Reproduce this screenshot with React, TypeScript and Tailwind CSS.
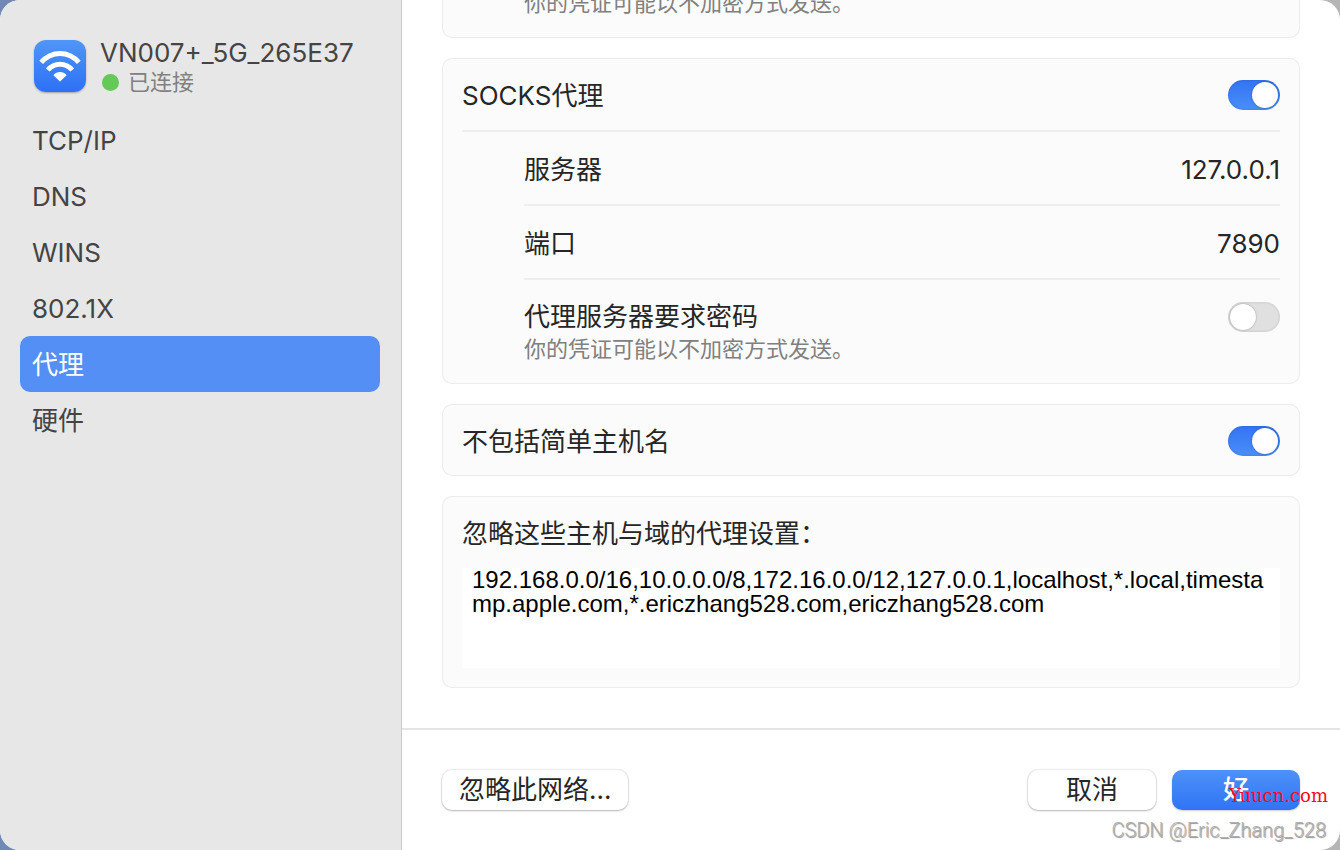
import React, { useId, useState } from "react";

function WifiIcon() {
  return (
    <svg viewBox="0 0 52 52" className="size-[52px]" aria-hidden="true">
      <path
        d="M7.2 22.4C17.6 10.5 34.4 10.5 44.8 22.4M13.8 30C20.4 22.2 31.6 22.2 38.2 30"
        fill="none"
        stroke="#fff"
        strokeWidth="5"
      />
      <path d="M19.3 35.2C22.8 31 29.2 31 32.7 35.2L26 41.4Z" fill="#fff" />
    </svg>
  );
}

function Toggle({ id, initial }: { id: string; initial: boolean }) {
  const [on, setOn] = useState(initial);
  return (
    <input
      id={id}
      type="checkbox"
      role="switch"
      checked={on}
      onChange={(e) => setOn(e.target.checked)}
      className="flex h-[30px] w-[52px] shrink-0 appearance-none items-center rounded-full bg-[#e0e0e0] p-[2px] shadow-[inset_0_0_2px_1px_rgba(0,0,0,0.08)] before:size-[26px] before:rounded-full before:bg-white before:shadow-[0_0_2px_rgba(0,0,0,0.35)] checked:justify-end checked:bg-linear-to-b checked:from-[#3374f3] checked:to-[#4a8ef8]"
    />
  );
}

function Card({ children }: { children: React.ReactNode }) {
  return (
    <section className="shrink-0 rounded-[10px] bg-[#fbfbfb] px-5 shadow-[inset_0_0_0_1px_#ececec]">
      {children}
    </section>
  );
}

function PasswordRow() {
  const id = useId();
  return (
    <div className="flex items-start justify-between py-5">
      <div>
        <label htmlFor={id} className="block leading-[34px]">
          代理服务器要求密码
        </label>
        <p className="text-[22px] leading-[30px] text-[#808080]">你的凭证可能以不加密方式发送。</p>
      </div>
      <div className="flex h-[34px] items-center">
        <Toggle id={id} initial={false} />
      </div>
    </div>
  );
}

function SwitchRow({ label }: { label: string }) {
  const id = useId();
  return (
    <div className="flex h-[72px] items-center justify-between pt-[2px]">
      <label htmlFor={id}>{label}</label>
      <Toggle id={id} initial={true} />
    </div>
  );
}

function FieldRow({ label, value }: { label: string; value: string }) {
  const id = useId();
  return (
    <div className="flex h-[74px] items-center justify-between border-b-2 border-[#eeeeee] pt-[2px]">
      <label htmlFor={id}>{label}</label>
      <input id={id} type="text" defaultValue={value} className="w-60 bg-transparent text-right outline-none" />
    </div>
  );
}

const items = ["TCP/IP", "DNS", "WINS", "802.1X", "代理", "硬件"];

function Sidebar() {
  const [active, setActive] = useState("代理");
  return (
    <aside className="flex w-[402px] shrink-0 flex-col border-r border-[#c9c9c9] bg-[#e7e7e7] px-5 pt-9 text-[#444]">
      <header className="flex h-[76px] items-start gap-[14px] pl-[14px]">
        <div className="mt-1 rounded-[12px] bg-linear-to-b from-[#5096f8] to-[#2e70f5] shadow-[0_1px_2px_rgba(0,0,0,0.3)]">
          <WifiIcon />
        </div>
        <div>
          <h1 className="leading-[34px]">VN007+_5G_265E37</h1>
          <p className="flex items-center gap-[9px] text-[22px] leading-6 text-[#808080]">
            <span className="ml-[2px] size-[17px] rounded-full bg-[#64c956]" />
            已连接
          </p>
        </div>
      </header>
      <nav className="flex flex-col pr-px">
        {items.map((item) => (
          <button
            key={item}
            type="button"
            onClick={() => setActive(item)}
            className={
              item === active
                ? "h-14 rounded-[10px] bg-[#548ff5] px-3 text-left text-white"
                : "h-14 rounded-[10px] px-3 text-left"
            }
          >
            {item}
          </button>
        ))}
      </nav>
    </aside>
  );
}

export default function App() {
  return (
    <div className="h-screen bg-linear-to-r from-[#7089b5] from-5% to-[#b5b5b5] to-20% font-['Inter','Noto_Sans_CJK_SC',sans-serif] text-[26px] text-[#262626]">
      <div className="relative flex h-full overflow-hidden rounded-[20px] bg-white">
        <Sidebar />
        <div className="flex min-w-0 flex-1 flex-col">
          <main className="flex min-h-0 flex-1 flex-col justify-end gap-5 overflow-hidden px-10 pb-10">
            <Card>
              <div className="pl-[62px]">
                <PasswordRow />
              </div>
            </Card>
            <Card>
              <div className="border-b-2 border-[#eeeeee]">
                <SwitchRow label="SOCKS代理" />
              </div>
              <div className="pl-[62px]">
                <FieldRow label="服务器" value="127.0.0.1" />
                <FieldRow label="端口" value="7890" />
                <PasswordRow />
              </div>
            </Card>
            <Card>
              <SwitchRow label="不包括简单主机名" />
            </Card>
            <Card>
              <label htmlFor="bypass" className="flex h-[72px] items-center pt-[2px]">
                忽略这些主机与域的代理设置：
              </label>
              <textarea
                id="bypass"
                spellCheck={false}
                className="mb-5 block h-[100px] w-full resize-none break-all bg-white px-[10px] font-['Liberation_Sans',sans-serif] text-[24px] leading-6 text-black outline-none"
                defaultValue="192.168.0.0/16,10.0.0.0/8,172.16.0.0/12,127.0.0.1,localhost,*.local,timestamp.apple.com,*.ericzhang528.com,ericzhang528.com"
              />
            </Card>
          </main>
          <footer className="flex h-[122px] shrink-0 items-center gap-4 border-t-2 border-[#e4e4e4] px-10">
            <button
              type="button"
              className="mr-auto h-10 rounded-[10px] bg-white px-[17px] leading-10 shadow-[0_0_1px_1px_rgba(0,0,0,0.08),0_1px_2px_rgba(0,0,0,0.22)]"
            >
              忽略此网络...
            </button>
            <button
              type="button"
              className="h-10 w-32 rounded-[10px] bg-white leading-10 shadow-[0_0_1px_1px_rgba(0,0,0,0.08),0_1px_2px_rgba(0,0,0,0.22)]"
            >
              取消
            </button>
            <button
              type="button"
              className="h-10 w-32 rounded-[10px] bg-linear-to-b from-[#4d91f8] to-[#3074f5] leading-10 font-medium text-white shadow-[0_1px_2px_rgba(0,0,0,0.2)]"
            >
              好
            </button>
          </footer>
        </div>
        <span className="absolute right-3 bottom-[42px] font-['DejaVu_Serif',serif] text-[18px] leading-6 text-[#ff0a14]">
          Yuucn.com
        </span>
        <span className="absolute right-[14px] bottom-2 font-['Roboto',sans-serif] text-[20px] leading-6 font-light text-[#b0b0b0] [text-shadow:1px_1px_1px_rgba(0,0,0,0.45)]">
          CSDN @Eric_Zhang_528
        </span>
      </div>
    </div>
  );
}
